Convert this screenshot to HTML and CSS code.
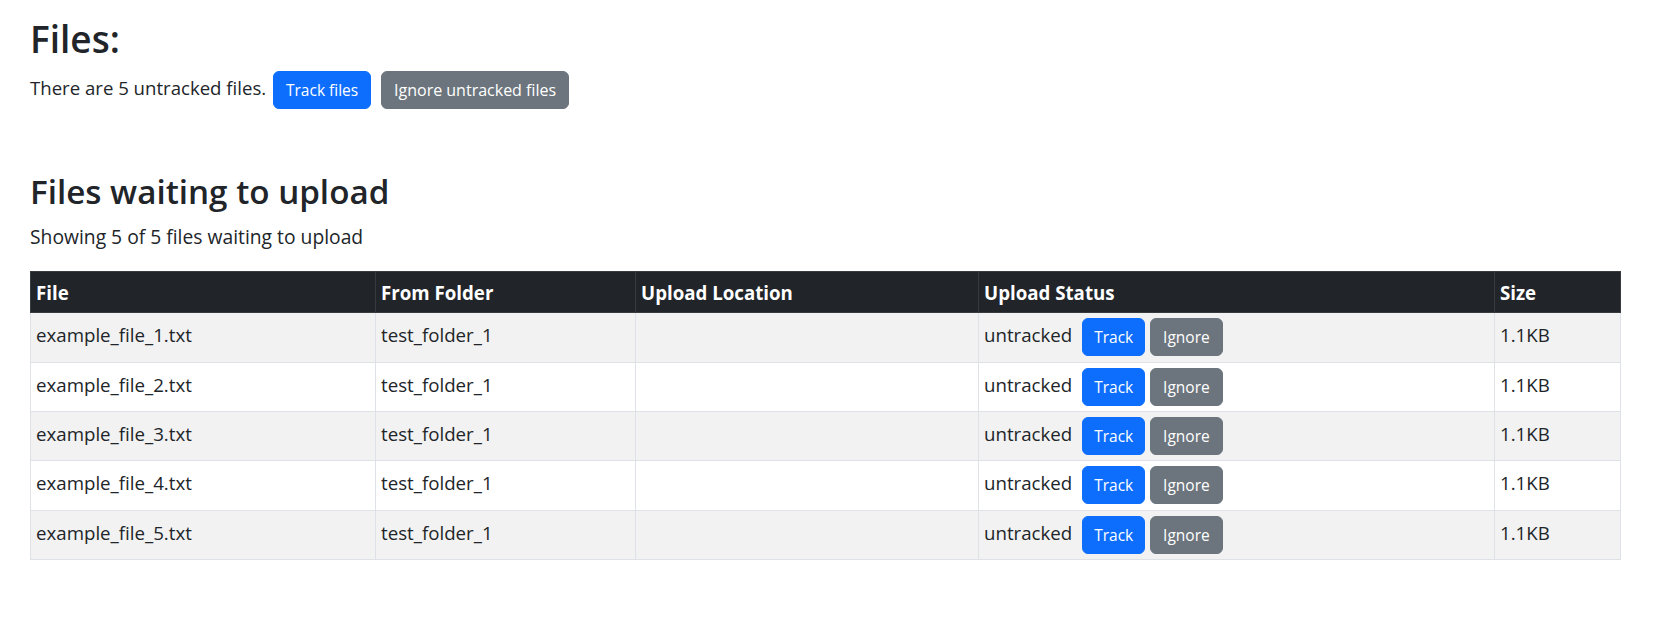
FILE: index.html
```html
<html>
    <head>
        <title>Files</title>
        <link rel="stylesheet" href="styles.css">
    </head>
    <body>
        <div class="container">
            <h1 class="title">Files:</h1>
            <p class="summary">There are 5 untracked files. <button class="btn btn-primary btn-track-all">Track files</button> <button class="btn btn-secondary btn-ignore-all">Ignore untracked files</button></p>

            <h2 class="subtitle">Files waiting to upload</h2>
            <p class="count">Showing 5 of 5 files waiting to upload</p>

            <table class="files-table">
                <colgroup>
                    <col class="col-file">
                    <col class="col-folder">
                    <col class="col-location">
                    <col class="col-status">
                    <col class="col-size">
                </colgroup>
                <thead>
                    <tr>
                        <th>File</th>
                        <th>From Folder</th>
                        <th>Upload Location</th>
                        <th>Upload Status</th>
                        <th>Size</th>
                    </tr>
                </thead>
                <tbody>
                    <tr>
                        <td>example_file_1.txt</td>
                        <td>test_folder_1</td>
                        <td></td>
                        <td>untracked <button class="btn btn-primary btn-track">Track</button> <button class="btn btn-secondary">Ignore</button></td>
                        <td>1.1KB</td>
                    </tr>
                    <tr>
                        <td>example_file_2.txt</td>
                        <td>test_folder_1</td>
                        <td></td>
                        <td>untracked <button class="btn btn-primary btn-track">Track</button> <button class="btn btn-secondary">Ignore</button></td>
                        <td>1.1KB</td>
                    </tr>
                    <tr>
                        <td>example_file_3.txt</td>
                        <td>test_folder_1</td>
                        <td></td>
                        <td>untracked <button class="btn btn-primary btn-track">Track</button> <button class="btn btn-secondary">Ignore</button></td>
                        <td>1.1KB</td>
                    </tr>
                    <tr>
                        <td>example_file_4.txt</td>
                        <td>test_folder_1</td>
                        <td></td>
                        <td>untracked <button class="btn btn-primary btn-track">Track</button> <button class="btn btn-secondary">Ignore</button></td>
                        <td>1.1KB</td>
                    </tr>
                    <tr>
                        <td>example_file_5.txt</td>
                        <td>test_folder_1</td>
                        <td></td>
                        <td>untracked <button class="btn btn-primary btn-track">Track</button> <button class="btn btn-secondary">Ignore</button></td>
                        <td>1.1KB</td>
                    </tr>
                </tbody>
            </table>
        </div>
    </body>
</html>
```

FILE: styles.css
```css
body {
    margin: 0;
    background-color: #fff;
    color: #212529;
    font-family: "Open Sans", "Noto Sans", sans-serif;
    font-size: 18px;
    line-height: 1.5;
}
.container {
    padding: 0 36px 40px 30px;
}
.title {
    font-size: 37px;
    font-weight: 600;
    line-height: 1.2;
    margin: 17px 0 10px;
}
.subtitle {
    font-size: 33.2px;
    font-weight: 600;
    line-height: 1.2;
    margin: 63px 0 11px;
}
.summary {
    margin: 0;
    font-size: 18.6px;
}
.count {
    margin: 0;
    font-size: 19.3px;
}
.btn {
    display: inline-block;
    vertical-align: middle;
    font-family: inherit;
    font-size: 15.5px;
    line-height: 24px;
    padding: 6px 12px;
    border: 1px solid transparent;
    border-radius: 6px;
    color: #fff;
    cursor: pointer;
}
.btn-primary {
    background-color: #0d6efd;
    border-color: #0d6efd;
}
.btn-secondary {
    background-color: #6c757d;
    border-color: #6c757d;
}
.btn-track-all {
    margin-left: 2px;
}
.btn-ignore-all {
    margin-left: 5px;
    font-size: 16px;
}
.btn-track {
    margin-left: 5px;
    padding: 6px 11px;
}
.files-table {
    width: 100%;
    margin-top: 19px;
    border-collapse: collapse;
    table-layout: fixed;
}
.col-file {
    width: 345px;
}
.col-folder {
    width: 260px;
}
.col-location {
    width: 343px;
}
.col-status {
    width: 516px;
}
.col-size {
    width: 126px;
}
th {
    background-color: #212529;
    color: #fff;
    border: 1px solid #373b3e;
    font-size: 18.7px;
    font-weight: bold;
    line-height: 27px;
    text-align: left;
    padding: 7px 5px 6px;
}
td {
    border: 1px solid #dee2e6;
    font-size: 18.7px;
    line-height: 27px;
    padding: 5px 5px 5.4px;
    vertical-align: baseline;
}
tbody tr:nth-child(odd) td {
    background-color: #f2f2f2;
}
```
